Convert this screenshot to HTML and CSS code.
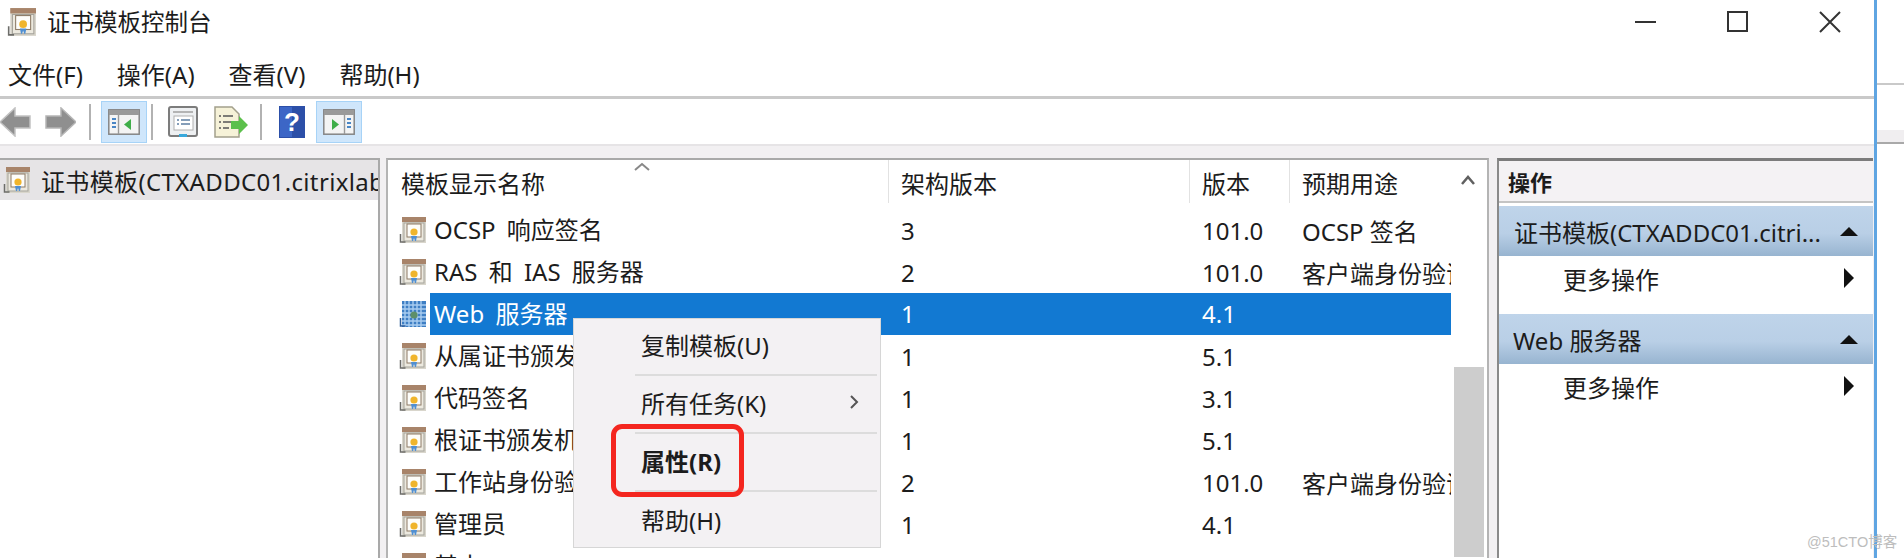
FILE: index.html
```html
<!DOCTYPE html>
<html lang="zh-CN">
<head>
<meta charset="utf-8">
<title>证书模板控制台</title>
<link rel="stylesheet" href="styles.css">
</head>
<body>
<svg class="defs" width="0" height="0">
  <defs>
    <symbol id="cert" viewBox="0 0 28 28">
      <rect x="4" y="1" width="24" height="26" fill="#d9d6cc"/>
      <rect x="4" y="1" width="24" height="5" fill="#a8846a"/>
      <rect x="6" y="7" width="20" height="18" fill="#ece9df" stroke="#a5a39b"/>
      <rect x="9" y="8" width="14" height="13" fill="#fdfdfa" stroke="#8d7b66"/>
      <path d="M13 20l1 5h1l1-3 1 3h1l1-5z" fill="#4f8fd3"/>
      <circle cx="16" cy="16" r="3.6" fill="#f0b52c"/>
      <path d="M2.500 18v8h5" fill="none" stroke="#6d6d6a" stroke-width="1.5"/>
    </symbol>
    <symbol id="cert-sel" viewBox="0 0 28 28">
      <rect x="4" y="1" width="24" height="26" fill="#3f7fc4"/>
      <path d="M4 5h24M4 9h24M4 13h24M4 17h24M4 21h24M4 25h24M7 1v26M11 1v26M15 1v26M19 1v26M23 1v26" stroke="#a9cdf0" stroke-width="1.4"/>
      <circle cx="16" cy="15" r="3.6" fill="#5d8f6a"/>
      <path d="M2.500 18v8h5" fill="none" stroke="#2f5f9c" stroke-width="1.5"/>
    </symbol>
    <symbol id="panel-left" viewBox="0 0 32 26">
      <rect x=".8" y=".8" width="30.4" height="24.4" fill="#f4f4f4" stroke="#858585" stroke-width="1.5"/>
      <rect x="1" y="1" width="30" height="5" fill="#9a9a9a"/>
      <path d="M10.500 6v19" stroke="#9a9a9a" stroke-width="1.400"/>
      <path d="M4 10h4M4 14h4M4 18h4" stroke="#4a86c5" stroke-width="2"/>
      <path d="M23 10v11l-7-5.500z" fill="#3fae49"/>
    </symbol>
    <symbol id="panel-right" viewBox="0 0 32 26">
      <rect x=".8" y=".8" width="30.4" height="24.4" fill="#f4f4f4" stroke="#858585" stroke-width="1.5"/>
      <rect x="1" y="1" width="30" height="5" fill="#9a9a9a"/>
      <path d="M21.500 6v19" stroke="#9a9a9a" stroke-width="1.400"/>
      <path d="M24 10h4M24 14h4M24 18h4" stroke="#4a86c5" stroke-width="2"/>
      <path d="M9 10v11l7-5.500z" fill="#3fae49"/>
    </symbol>
  </defs>
</svg>

<div class="screen">
  <div class="window">
    <header class="head">
      <div class="titlebar">
        <svg class="title-icon"><use href="#cert"/></svg>
        <span class="title-text">证书模板控制台</span>
        <div class="win-btns">
          <svg class="win-btn" viewBox="0 0 22 22"><path d="M0 11h21" stroke="#333" stroke-width="2"/></svg>
          <svg class="win-btn" viewBox="0 0 22 22"><rect x="1" y="1" width="19" height="19" fill="none" stroke="#333" stroke-width="2"/></svg>
          <svg class="win-btn" viewBox="0 0 22 22"><path d="M1 1l20 20M21 1L1 21" stroke="#333" stroke-width="2"/></svg>
        </div>
      </div>
      <nav class="menubar">
        <span>文件(F)</span><span>操作(A)</span><span>查看(V)</span><span>帮助(H)</span>
      </nav>
    </header>

    <div class="toolbar">
      <svg class="tool tool-nav" viewBox="0 0 32 30"><path d="M0 15L15 1v8h15v12H15v8z" fill="#8f8f8f" stroke="#c2c2c2" stroke-width="1.500"/></svg>
      <svg class="tool tool-nav" viewBox="0 0 32 30"><path d="M32 15L17 1v8H2v12h15v8z" fill="#8f8f8f" stroke="#b5b5b5" stroke-width="1.500"/></svg>
      <i class="tool-sep"></i>
      <span class="toggle"><svg class="tool-panel"><use href="#panel-left"/></svg></span>
      <i class="tool-sep tight"></i>
      <svg class="tool tool-doc" viewBox="0 0 30 32"><rect x="1" y="1" width="28" height="29" rx="2" fill="#eef0f2" stroke="#7c7c7c" stroke-width="2"/><path d="M5 6h20" stroke="#b4b4b4" stroke-width="2"/><rect x="6" y="10" width="19" height="14" fill="#fff" stroke="#b0b0b0"/><path d="M9 14h2M13 14h9M9 18h2M13 18h9" stroke="#5e7fa3" stroke-width="1.500"/><rect x="11" y="28" width="8" height="3" fill="#39a9dc"/></svg>
      <svg class="tool tool-export" viewBox="0 0 34 32"><path d="M1 1h17l7 7v23H1z" fill="#f6f2d8" stroke="#a3a08c" stroke-width="1.500"/><path d="M5 10h2M9 10h10M5 16h2M9 16h8M5 22h2M9 22h6" stroke="#555" stroke-width="1.500"/><path d="M17 15h8v-5l9 9-9 9v-5h-8z" fill="#5cc04c"/></svg>
      <i class="tool-sep wide"></i>
      <svg class="tool tool-help" viewBox="0 0 26 32"><rect width="26" height="32" fill="#2c4fa8"/><rect x="1" y="1" width="12" height="30" fill="#3c66c6"/><text class="help-q" x="13" y="25" text-anchor="middle">?</text></svg>
      <span class="toggle"><svg class="tool-panel"><use href="#panel-right"/></svg></span>
    </div>

    <main class="workspace">
      <aside class="tree">
        <div class="tree-row">
          <svg class="row-icon"><use href="#cert"/></svg>
          <span class="tree-text">证书模板(CTXADDC01.citrixlab</span>
        </div>
      </aside>

      <section class="list">
        <div class="list-main">
          <div class="list-head row-grid">
            <span class="col-name">模板显示名称<svg class="sort" viewBox="0 0 16 9"><path d="M1 8l7-6 7 6" fill="none" stroke="#888" stroke-width="2"/></svg></span>
            <span class="col-div">架构版本</span>
            <span class="col-div">版本</span>
            <span class="col-div">预期用途</span>
          </div>
          <div class="row row-grid"><span class="name"><svg class="row-icon"><use href="#cert"/></svg><b>OCSP 响应签名</b></span><span>3</span><span>101.0</span><span class="use">OCSP 签名</span></div>
          <div class="row row-grid"><span class="name"><svg class="row-icon"><use href="#cert"/></svg><b>RAS 和 IAS 服务器</b></span><span>2</span><span>101.0</span><span class="use">客户端身份验证</span></div>
          <div class="row row-grid selected"><span class="name"><svg class="row-icon"><use href="#cert-sel"/></svg><b>Web 服务器</b></span><span>1</span><span>4.1</span><span class="use"></span></div>
          <div class="row row-grid"><span class="name"><svg class="row-icon"><use href="#cert"/></svg><b>从属证书颁发机构</b></span><span>1</span><span>5.1</span><span class="use"></span></div>
          <div class="row row-grid"><span class="name"><svg class="row-icon"><use href="#cert"/></svg><b>代码签名</b></span><span>1</span><span>3.1</span><span class="use"></span></div>
          <div class="row row-grid"><span class="name"><svg class="row-icon"><use href="#cert"/></svg><b>根证书颁发机构</b></span><span>1</span><span>5.1</span><span class="use"></span></div>
          <div class="row row-grid"><span class="name"><svg class="row-icon"><use href="#cert"/></svg><b>工作站身份验证</b></span><span>2</span><span>101.0</span><span class="use">客户端身份验证</span></div>
          <div class="row row-grid"><span class="name"><svg class="row-icon"><use href="#cert"/></svg><b>管理员</b></span><span>1</span><span>4.1</span><span class="use"></span></div>
          <div class="row row-grid"><span class="name"><svg class="row-icon"><use href="#cert"/></svg><b>基本 EFS</b></span><span>1</span><span>3.1</span><span class="use"></span></div>
        </div>
        <div class="scrollbar">
          <svg class="scroll-up" viewBox="0 0 16 10"><path d="M2 9l6-7 6 7" fill="none" stroke="#606060" stroke-width="2.500"/></svg>
          <div class="scroll-thumb"></div>
        </div>
      </section>

      <aside class="actions">
        <h2 class="actions-head">操作</h2>
        <div class="group"><span class="group-text">证书模板(CTXADDC01.citri...</span><i class="tri-up"></i></div>
        <div class="action"><span>更多操作</span><i class="tri-right"></i></div>
        <div class="group second"><span class="group-text">Web 服务器</span><i class="tri-up"></i></div>
        <div class="action"><span>更多操作</span><i class="tri-right"></i></div>
      </aside>
    </main>
  </div>
  <div class="strip">
    <div class="strip-line"></div>
    <div class="strip-band"></div>
  </div>
</div>

<div class="context-menu">
  <div class="menu-item"><span>复制模板(U)</span></div>
  <div class="menu-item"><span>所有任务(K)</span><svg class="menu-arrow" viewBox="0 0 10 16"><path d="M2 2l6 6-6 6" fill="none" stroke="#555" stroke-width="2"/></svg></div>
  <div class="menu-item strong"><span>属性(R)</span></div>
  <div class="menu-item"><span>帮助(H)</span></div>
</div>
<div class="callout"></div>
<div class="watermark">@51CTO博客</div>
</body>
</html>
```
FILE: styles.css
```css
* { box-sizing: border-box; }
html, body { margin: 0; padding: 0; }
body {
  width: 1904px;
  height: 558px;
  overflow: hidden;
  background: #fff;
  color: #1c1c1c;
  font-family: "Noto Sans", "Noto Sans CJK SC", sans-serif;
  font-size: 24px;
  position: relative;
}
.defs { position: absolute; }
.screen { display: flex; height: 558px; }
.window {
  width: 1877px;
  height: 558px;
  border-right: 3px solid #5fa5e2;
  display: flex;
  flex-direction: column;
  flex: none;
}
.head { height: 99px; border-bottom: 3px solid #c9c9c9; flex: none; }
.titlebar { display: flex; align-items: center; height: 44px; }
.title-icon { width: 30px; height: 30px; margin-left: 6px; }
.title-text { margin-left: 11px; font-size: 23.500px; line-height: 44px; }
.win-btns { margin-left: auto; display: flex; gap: 70px; padding-right: 33px; }
.win-btn { width: 22px; height: 22px; }
.menubar { display: flex; gap: 34px; padding: 13px 0 0 8px; line-height: 36px; white-space: nowrap; }

.toolbar {
  height: 47px;
  flex: none;
  display: flex;
  align-items: center;
  border-bottom: 2px solid #e6e4e6;
}
.tool { flex: none; }
.tool-nav { width: 32px; height: 30px; margin-right: 12px; }
.tool-sep { width: 2px; height: 36px; background: #b2b2b2; margin: 0 10px 0 1px; flex: none; }
.tool-sep.tight { margin: 0 15px 0 4px; }
.tool-sep.wide { margin: 0 17px 0 12px; }
.toggle {
  width: 46px;
  height: 42px;
  background: #cfe6fb;
  border: 1px solid #a7d3f7;
  display: flex;
  align-items: center;
  justify-content: center;
  flex: none;
}
.tool-panel { width: 32px; height: 26px; }
.tool-doc { width: 30px; height: 32px; margin-right: 16px; }
.tool-export { width: 34px; height: 32px; }
.tool-help { width: 26px; height: 32px; margin-right: 11px; }
.help-q { fill: #fff; font-family: "Liberation Sans", sans-serif; font-size: 26px; font-weight: 700; }

.workspace {
  flex: 1;
  min-height: 0;
  display: flex;
  background: #f2f0f2;
  padding-top: 12px;
  overflow: hidden;
}
.tree {
  width: 380px;
  flex: none;
  background: #fff;
  border-top: 2px solid #a9a9a9;
  border-right: 2px solid #a9a9a9;
}
.tree-row {
  height: 40px;
  background: #e6e4e6;
  display: flex;
  align-items: center;
  padding-left: 2px;
  overflow: hidden;
  white-space: nowrap;
}
.tree-text { margin-left: 11px; letter-spacing: .35px; }
.row-icon { width: 28px; height: 28px; flex: none; }

.list {
  width: 1103px;
  margin-left: 6px;
  flex: none;
  display: flex;
  background: #fff;
  border-top: 2px solid #a9a9a9;
  border-left: 2px solid #b4b4b4;
  border-right: 2px solid #b4b4b4;
}
.list-main { width: 1063px; flex: none; overflow: hidden; }
.row-grid { display: grid; grid-template-columns: 500px 301px 100px 163px; }
.list-head { height: 49px; align-items: stretch; }
.list-head > span { display: flex; align-items: center; padding-top: 2px; position: relative; margin-bottom: 6px; }
.col-name { padding-left: 13px; }
.col-div { padding-left: 12px; border-left: 1px solid #e2e2e2; }
.sort { position: absolute; left: 246px; top: 2px; width: 16px; height: 9px; }
.row { height: 42px; align-items: center; white-space: nowrap; }
.row > span { padding-left: 13px; overflow: hidden; }
.row > .name { display: flex; align-items: center; padding-left: 10px; height: 42px; }
.name b { font-weight: 400; margin-left: 4px; padding-left: 4px; line-height: 42px; flex: 1; word-spacing: 5px; }
.row.selected { color: #fff; }
.row.selected > span { background: #1279d2; height: 42px; line-height: 42px; }
.row.selected > .name { background: linear-gradient(to right, #fff 42px, #1279d2 42px); }
.scrollbar { flex: 1; padding: 0 4px 0 3px; position: relative; }
.scroll-up { position: absolute; left: 9px; top: 15px; width: 16px; height: 10px; }
.scroll-thumb { position: absolute; left: 3px; top: 207px; width: 30px; height: 190px; background: #cdcdcd; }

.actions {
  width: 376px;
  margin-left: 8px;
  flex: none;
  background: #fff;
  border-top: 3px solid #7c7c7c;
  border-left: 2px solid #8a8a8a;
}
.actions-head {
  margin: 0;
  height: 42px;
  background: #f4f2f4;
  border-bottom: 2px solid #c4c4c4;
  font-size: 22px;
  font-weight: 700;
  line-height: 42px;
  padding-left: 9px;
}
.group {
  margin-top: 3px;
  height: 50px;
  display: flex;
  align-items: center;
  justify-content: space-between;
  padding: 0 15px 0 15px;
  background: linear-gradient(to bottom, #bfd4ea 0%, #b9cfe6 55%, #97b4d0 100%);
  white-space: nowrap;
}
.group.second { margin-top: 0; padding-left: 14px; }
.group-text { overflow: hidden; }
.tri-up { width: 0; height: 0; border-left: 9px solid transparent; border-right: 9px solid transparent; border-top: 0; border-bottom: 9px solid #111; flex: none; }
.action {
  height: 58px;
  display: flex;
  align-items: center;
  justify-content: space-between;
  padding: 0 19px 14px 64px;
}
.tri-right { width: 0; height: 0; border-top: 10px solid transparent; border-bottom: 10px solid transparent; border-left: 10px solid #111; flex: none; }

.strip { flex: 1; padding-top: 83px; }
.strip-line { height: 2px; background: #c9c9c9; }
.strip-band { height: 14px; margin-top: 45px; background: #f0eef0; border-bottom: 2px solid #a9a9a9; }

.context-menu {
  position: absolute;
  left: 573px;
  top: 318px;
  width: 308px;
  height: 230px;
  background: #f3f1f3;
  border: 1px solid #d6d6d6;
}
.menu-item {
  height: 58px;
  margin-left: 61px;
  margin-right: 3px;
  display: flex;
  align-items: center;
  justify-content: space-between;
  padding: 0 18px 4px 6px;
  border-bottom: 2px solid #dcdcdc;
}
.menu-item:first-child { height: 57px; }
.menu-item:last-child { border-bottom: 0; }
.menu-item.strong { font-weight: 700; }
.menu-arrow { width: 10px; height: 16px; }
.callout {
  position: absolute;
  left: 611px;
  top: 424px;
  width: 133px;
  height: 73px;
  border: 5px solid #f4261f;
  border-radius: 11px;
}
.watermark {
  position: absolute;
  left: 1807px;
  top: 533px;
  font-family: "Liberation Sans", "Noto Sans CJK SC", sans-serif;
  font-size: 14.500px;
  line-height: 18px;
  color: #bdbdbd;
  white-space: nowrap;
}
```
